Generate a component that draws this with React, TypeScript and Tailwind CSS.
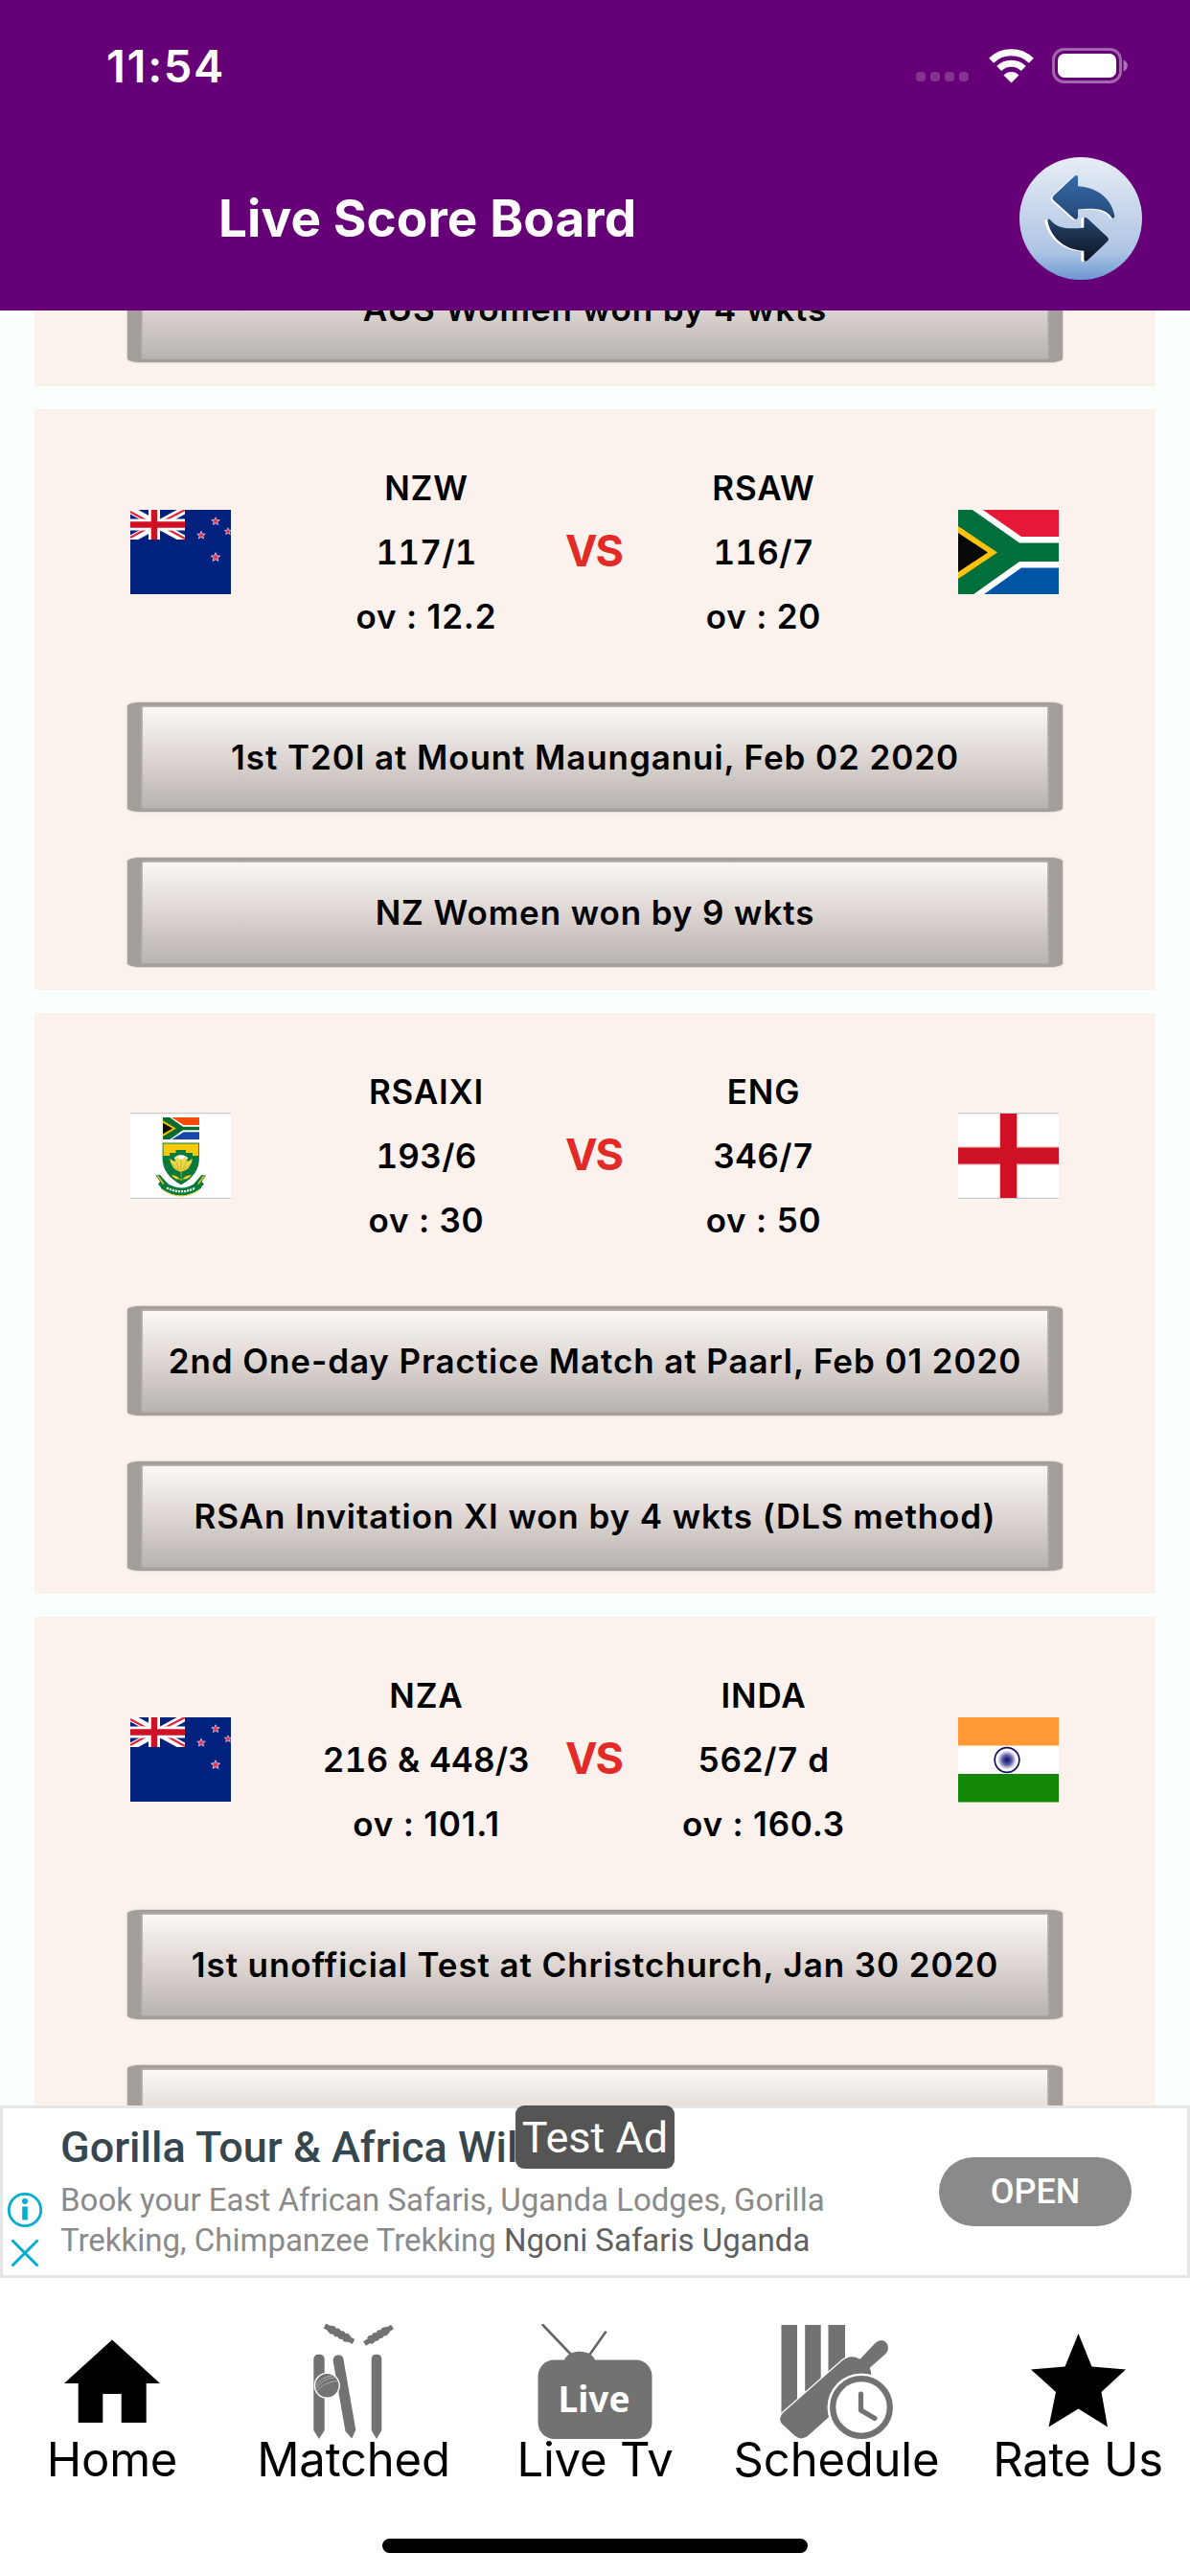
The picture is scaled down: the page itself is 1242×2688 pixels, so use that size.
import type { ReactNode } from "react";

const sans = "font-['Inter','Liberation_Sans',sans-serif]";

function StatusBar() {
  return (
    <div className="flex h-[136px] items-center justify-between pl-[111px] pr-[65px]">
      <span className="text-[47px] leading-none font-semibold tracking-[1.7px] text-white">11:54</span>
      <div className="flex items-center">
        <div className="mr-[20px] flex gap-[5px] pt-[24px]">
          {[0, 1, 2, 3].map((i) => (
            <span key={i} className="h-[10px] w-[10px] rounded-[4px] bg-white/20" />
          ))}
        </div>
        <svg width="49" height="37" viewBox="0 0 49 37" className="mr-[18px]">
          <g fill="none" stroke="#fff">
            <path d="M3.600 13.200A30 30 0 0 1 45.400 13.200" strokeWidth="7" />
            <path d="M11.700 21.500A18.300 18.300 0 0 1 37.300 21.500" strokeWidth="7" />
          </g>
          <path d="M24.500 36L17 28.400A11 11 0 0 1 32 28.400Z" fill="#fff" stroke="#fff" strokeWidth="1" strokeLinejoin="round" />
        </svg>
        <svg width="79" height="37" viewBox="0 0 79 37">
          <rect x="1.500" y="1.500" width="70" height="34" rx="11" fill="none" stroke="#fff" strokeOpacity="0.4" strokeWidth="3" />
          <rect x="6" y="6" width="61" height="25" rx="7" fill="#fff" />
          <path d="M74.500 12.500c2.600 1 4.300 3.400 4.300 6s-1.700 5-4.300 6z" fill="#fff" fillOpacity="0.45" />
        </svg>
      </div>
    </div>
  );
}

function RefreshIcon() {
  const up =
    "M178 193L242 133Q254 124 255 134V162C320 166 362 205 370 256Q369 267 361 261C345 233 305 230 255 235V258Q254 270 244 265L178 206Q173 200 178 193Z";
  const down =
    "M347 321L286 264Q275 255 274 264V292C225 298 190 295 169 268Q162 261 160 270C170 325 215 362 274 365V392Q275 402 285 395L348 335Q354 328 347 321Z";
  return (
    <svg width="128" height="128" viewBox="72 71.500 384 384">
      <defs>
        <linearGradient id="disc" x1="0" y1="0" x2="0" y2="1">
          <stop offset="0" stopColor="#e6edf6" />
          <stop offset="0.500" stopColor="#c3d2e9" />
          <stop offset="0.780" stopColor="#adc3e4" />
          <stop offset="1" stopColor="#6b97d0" />
        </linearGradient>
        <linearGradient id="arrow" gradientUnits="userSpaceOnUse" x1="0" y1="130" x2="0" y2="400">
          <stop offset="0" stopColor="#3569a8" />
          <stop offset="0.400" stopColor="#294f80" />
          <stop offset="0.650" stopColor="#1d3453" />
          <stop offset="1" stopColor="#0b1420" />
        </linearGradient>
      </defs>
      <circle cx="264" cy="263.500" r="192" fill="url(#disc)" />
      <g fill="#fff">
        <path d={up} transform="translate(-6 2)" />
        <path d={down} transform="translate(-9 1)" />
      </g>
      <path d={up} fill="url(#arrow)" />
      <path d={down} fill="url(#arrow)" />
    </svg>
  );
}

function Flag({ children }: { children: ReactNode }) {
  return (
    <svg width="105" height="90" viewBox="0 0 105 90" preserveAspectRatio="none">
      {children}
    </svg>
  );
}

const star = "M0-5L1.400-1.700 5-1.500 2.200.700 3.100 4.200 0 2.300-3.100 4.200-2.200.700-5-1.500-1.400-1.700Z";

function NewZealand() {
  return (
    <Flag>
      <rect y="1" width="105" height="88" fill="#00217d" />
      <svg y="1" width="57" height="31" viewBox="0 0 57 31" preserveAspectRatio="none">
        <path d="M0 0L57 31M57 0L0 31" stroke="#fff" strokeWidth="8" />
        <path d="M0 2L22 14M57 0L34 12M0 29L20 18M57 30L35 18" stroke="#e0243a" strokeWidth="2.200" />
        <path d="M25 0V31M0 15.500H57" stroke="#fff" strokeWidth="12" />
        <path d="M25 0V31M0 15.500H57" stroke="#cf1126" strokeWidth="6.500" />
      </svg>
      <g fill="#e8304a" stroke="#d9d4ea" strokeWidth="0.900">
        <path d={star} transform="translate(89 13) scale(.85)" />
        <path d={star} transform="translate(74 27.500) scale(.85)" />
        <path d={star} transform="translate(102 23.500) scale(.75)" />
        <path d={star} transform="translate(89 50.500) scale(.95)" />
      </g>
    </Flag>
  );
}

function SouthAfrica() {
  return (
    <Flag>
      <svg y="1" width="105" height="88" viewBox="0 0 105 88">
        <rect width="105" height="44" fill="#e51937" />
        <rect y="44" width="105" height="45" fill="#0054a6" />
        <path d="M14-4L65 31.500H110M14 93L65 57H110" fill="none" stroke="#fff" strokeWidth="7" />
        <path d="M-5-9L12-2 64 34.500H110V54H64L12 91-5 98Z" fill="#006f3c" />
        <path d="M0 17L41 44.500 0 72Z" fill="#ffc20e" />
        <path d="M0 24L31 44.500 0 65Z" fill="#08080a" />
      </svg>
    </Flag>
  );
}

function Crest() {
  return (
    <Flag>
      <rect width="105" height="90" fill="#fff" />
      <path d="M0 .6H105M0 89.400H105" stroke="#c9c9cb" strokeWidth="1.400" />
      <svg x="34" y="5" width="38" height="23" viewBox="0 0 105 88" preserveAspectRatio="none">
        <rect width="105" height="44" fill="#fa4a0c" />
        <rect y="44" width="105" height="44" fill="#1648a8" />
        <path d="M14-4L58 35H110M14 92L58 54H110" fill="none" stroke="#fff" strokeWidth="9" />
        <path d="M0-4H16L58 37H110V51H58L16 92H0Z" fill="#0a6b30" />
        <path d="M0 12L38 44 0 76Z" fill="#f5c000" />
        <path d="M0 22L28 44 0 66Z" fill="#0c0c08" />
      </svg>
      <path d="M26.500 65.500L31 65 39 74 33.500 80 29 74.500 31 72ZM79 65.500L74.500 65 66.500 74 72 80 77 74.500 74.500 72Z" fill="#0a7a3c" />
      <path d="M28.500 66L35 75M77 66L70.500 75" stroke="#e9c71c" strokeWidth="1.400" />
      <path d="M34 75.500Q43 82.500 53 82.500T71.500 75.500" fill="none" stroke="#0a7a3c" strokeWidth="8" />
      <path d="M38 78.500Q53 86 68 78.500" fill="none" stroke="#e6f2e6" strokeWidth="2.200" strokeDasharray="2.200 0.900" />
      <path d="M33 80Q43 87 53 87T73 80" fill="none" stroke="#e3c62c" strokeWidth="0.900" />
      <path d="M33 31H72.500V48C72.500 60 66 69 53 76C40 69 33 60 33 48Z" fill="#0a7a3c" stroke="#fff" strokeWidth="1.200" />
      <path d="M34.500 32.500H71V45H65V42H58V39H47.500V42H41V45H34.500Z" fill="#f8c80a" />
      <path d="M46 47Q53 41 60 47L58 52H48Z" fill="#fff" />
      <path d="M41 48Q43 60 53 62Q63 60 65 48L60 51 57 46 53 50 49 46 46 51Z" fill="#ecd64a" />
      <path d="M47 49L51 60M59 49L55 60M53 48V68M43 53L50 60M63 53L56 60" stroke="#c9a81c" strokeWidth="0.800" />
      <path d="M43 65Q49 65 53 71Q57 65 64 65Q59 71 53 69Q47 71 43 65Z" fill="#f3cf1e" />
    </Flag>
  );
}

function England() {
  return (
    <Flag>
      <rect width="105" height="90" fill="#fff" />
      <path d="M0 .6H105M0 89.400H105" stroke="#c9c9cb" strokeWidth="1.400" />
      <path d="M52.500 1V89M0 45H105" stroke="#f4c4c8" strokeWidth="19.500" />
      <path d="M52.500 1V89M0 45H105" stroke="#ce1124" strokeWidth="17" />
    </Flag>
  );
}

function India() {
  return (
    <Flag>
      <defs>
        <radialGradient id="wheel">
          <stop offset="0" stopColor="#0b0b6a" />
          <stop offset="0.500" stopColor="#5c5ca6" />
          <stop offset="1" stopColor="#fff" />
        </radialGradient>
      </defs>
      <rect y="1" width="105" height="88" fill="#fff" />
      <rect y="1" width="105" height="29.500" fill="#ff9933" />
      <rect y="60" width="105" height="29.500" fill="#138808" />
      <circle cx="51" cy="45.500" r="10" fill="url(#wheel)" />
      <circle cx="51" cy="45.500" r="12.800" fill="none" stroke="#10105e" strokeWidth="1.700" />
    </Flag>
  );
}

function Plate({ children }: { children?: ReactNode }) {
  return (
    <div className="mx-[97px] h-[114px] rounded-[14px/4px] bg-[#a39e9a] px-[16px] py-[5px] shadow-[0_0_2px_#a39e9a]">
      <div className="flex h-full items-center justify-center bg-linear-to-b from-[#fdf8f5] via-[#ddd6d2] to-[#bab4b0] pt-[2px] text-[35px] leading-none font-[560] tracking-[0.91px] whitespace-nowrap text-black shadow-[0_0_2px_1px_#c5c0bc]">
        {children}
      </div>
    </div>
  );
}

type Side = { name: string; score: string; overs: string; flag: ReactNode };

function Team({ side, width }: { side: Side; width: string }) {
  return (
    <div className={`${width} flex flex-col items-center text-[35px] leading-[67px] font-[560] tracking-[0.8px] whitespace-nowrap text-black`}>
      <span>{side.name}</span>
      <span className="tracking-[0.25px] tabular-nums">{side.score}</span>
      <span>{side.overs}</span>
    </div>
  );
}

function MatchCard({ home, away, venue, result }: { home: Side; away: Side; venue: string; result?: string }) {
  return (
    <section className="flex h-[606px] shrink-0 flex-col bg-[#fcf2ed] pt-[48px]">
      <div className="flex h-[202px] items-center px-[100px]">
        {home.flag}
        <Team side={home} width="ml-[62px] w-[284px]" />
        <span className="w-[65px] pb-[3px] text-center text-[45px] leading-none font-bold tracking-[-2px] text-[#e22a26]">VS</span>
        <Team side={away} width="mr-[58px] w-[290px]" />
        {away.flag}
      </div>
      <div className="flex flex-col gap-[48px] pt-[55.500px]">
        <Plate>{venue}</Plate>
        <Plate>{result}</Plate>
      </div>
    </section>
  );
}

const matches = [
  {
    home: { name: "NZW", score: "117/1", overs: "ov : 12.2", flag: <NewZealand /> },
    away: { name: "RSAW", score: "116/7", overs: "ov : 20", flag: <SouthAfrica /> },
    venue: "1st T20I at Mount Maunganui, Feb 02 2020",
    result: "NZ Women won by 9 wkts",
  },
  {
    home: { name: "RSAIXI", score: "193/6", overs: "ov : 30", flag: <Crest /> },
    away: { name: "ENG", score: "346/7", overs: "ov : 50", flag: <England /> },
    venue: "2nd One-day Practice Match at Paarl, Feb 01 2020",
    result: "RSAn Invitation XI won by 4 wkts (DLS method)",
  },
  {
    home: { name: "NZA", score: "216 & 448/3", overs: "ov : 101.1", flag: <NewZealand /> },
    away: { name: "INDA", score: "562/7 d", overs: "ov : 160.3", flag: <India /> },
    venue: "1st unofficial Test at Christchurch, Jan 30 2020",
  },
];

function AdBanner() {
  return (
    <aside className="relative flex h-[180px] shrink-0 items-center border-[3px] border-[#e4e6e8] bg-white font-['Roboto',sans-serif]">
      <div className="flex w-[60px] flex-col items-center self-end pr-[15px] pb-[8px]">
        <svg width="38" height="38" viewBox="0 0 38 38">
          <circle cx="19" cy="19" r="16.700" fill="none" stroke="#00aecd" strokeWidth="2.800" />
          <circle cx="19" cy="10" r="3" fill="#00aecd" />
          <path d="M16.200 15.500H21.800V29.500H16.200Z" fill="#00aecd" />
        </svg>
        <svg width="30" height="30" viewBox="0 0 30 30" className="mt-[11px]">
          <path d="M1.500 1.500L28.500 28.500M28.500 1.500L1.500 28.500" stroke="#00aecd" strokeWidth="3" />
        </svg>
      </div>
      <div className="flex-1">
        <h2 className="h-[60px] text-[45px] leading-[52px] font-medium whitespace-nowrap text-[#37474f]">Gorilla Tour &amp; Africa Wil</h2>
        <p className="w-[860px] text-[33px] leading-[42.500px] text-[#8a8a8a]">
          Book your East African Safaris, Uganda Lodges, Gorilla
          <br />
          Trekking, Chimpanzee Trekking <span className="text-[#606060]">Ngoni Safaris Uganda</span>
        </p>
      </div>
      <button className="mr-[58px] h-[72px] w-[201px] rounded-full bg-[#8a8a8a] text-[36px] leading-none font-medium text-white">OPEN</button>
      <div className="absolute top-[-3px] left-[535px] flex h-[66px] w-[166px] items-center justify-center rounded-[9px] bg-[#555] text-[45px] leading-none text-white">
        Test Ad
      </div>
    </aside>
  );
}

function IconBox({ children }: { children: ReactNode }) {
  return (
    <svg width="120" height="120" viewBox="0 0 120 120" fill="#727272">
      {children}
    </svg>
  );
}

const tabs = [
  {
    label: "Home",
    icon: (
      <IconBox>
        <path d="M60 16.500L110 62H95.700V103H69.700V73H50.300V103H24.700V62H10Z" fill="#000" />
      </IconBox>
    ),
  },
  {
    label: "Matched",
    icon: (
      <IconBox>
        <path d="M18.300 37Q18.300 31.700 24 31.700T29.700 37V111L24 120 18.300 111Z" />
        <path d="M78.700 37Q78.700 31.700 84 31.700T89.300 37V111L84 120 78.700 111Z" />
        <path d="M38.700 39Q38.200 33.300 43.500 32.500T49.500 37L62.300 110.500 58.200 119.500 51.500 112Z" />
        <g stroke="#727272" strokeWidth="5.500">
          <path d="M30 2L60 18.500M71.500 20.500L100.500 3" />
          <path d="M34.500 4.500L55.500 16M76 17.800L96 5.700" strokeWidth="7.500" />
          <path d="M36.500 5.600L54.500 15.500M77 17L95 6.300" strokeWidth="9" strokeDasharray="3 2.500" />
        </g>
        <circle cx="32.300" cy="64.300" r="12.900" stroke="#fff" strokeWidth="1.400" />
        <path d="M21 67Q27 57.500 41.500 55.500M21.500 70Q29 60.500 43.500 59.500M20.500 64Q27 55 38 54" fill="none" stroke="#c4c4c4" strokeWidth="0.700" />
      </IconBox>
    ),
  },
  {
    label: "Live Tv",
    icon: (
      <IconBox>
        <path d="M5.500 1L36 33M71 8.500L53 34" stroke="#666" strokeWidth="2.600" strokeLinecap="round" />
        <path d="M27.500 40C29 25 59 25 60.500 40Z" />
        <rect x="0.500" y="37.500" width="119" height="82.500" rx="17" />
        <text x="59" y="92" textAnchor="middle" fill="#fff" className="font-['Noto_Sans',sans-serif] text-[37px] font-bold">
          Live
        </text>
      </IconBox>
    ),
  },
  {
    label: "Schedule",
    icon: (
      <IconBox>
        <path d="M2.500 1H19V90L2.500 98ZM27.200 1H43.700V70H27.200ZM51.500 1H69V60H51.500Z" />
        <path
          d="M66 37.500Q75 30.500 84.500 36L100 19.500Q107 13.500 112.500 19Q117 25.500 112 31.500L95.500 46Q100 58 89 65L32 116Q24 123.500 16 117L2.500 104.500Q-2 99 3.500 92.500Z"
          stroke="#fff"
          strokeWidth="1.200"
        />
        <circle cx="86" cy="87" r="35.500" fill="#fff" />
        <circle cx="86" cy="87" r="29.800" fill="#fff" stroke="#727272" strokeWidth="6.300" />
        <path d="M85.500 73V90L100 98.500" fill="none" stroke="#727272" strokeWidth="5.200" strokeLinecap="round" strokeLinejoin="round" />
      </IconBox>
    ),
  },
  {
    label: "Rate Us",
    icon: (
      <IconBox>
        <path d="M60.500 10L74.500 44.500 110 47.500 84.500 71 91 107.500 60.500 88.500 29.500 107.500 37 71 11 47.500 46.500 44.500Z" fill="#000" />
      </IconBox>
    ),
  },
];

function TabBar() {
  return (
    <nav className="flex h-[311px] shrink-0 flex-col items-center bg-white">
      <div className="flex w-[1260px] shrink-0 pt-[48px]">
        {tabs.map((t) => (
          <div key={t.label} className="flex w-[252px] flex-col items-center">
            {t.icon}
            <span className="text-[49px] leading-[44px] tracking-[-0.2px] whitespace-nowrap text-black">{t.label}</span>
          </div>
        ))}
      </div>
      <div className="mt-auto mb-[24px] h-[15px] w-[444px] rounded-full bg-black" />
    </nav>
  );
}

export default function App() {
  return (
    <div className={`${sans} flex h-[2688px] w-[1242px] flex-col overflow-hidden bg-[#fafffd]`}>
      <header className="h-[324px] shrink-0 bg-[#660077]">
        <StatusBar />
        <div className="flex items-center justify-between pt-[28px] pr-[50px] pl-[228px]">
          <h1 className="text-[53px] leading-none font-[650] tracking-[0.1px] text-white">Live Score Board</h1>
          <RefreshIcon />
        </div>
      </header>
      <main className="flex min-h-0 flex-1 flex-col gap-[24px] overflow-hidden px-[36px]">
        <section className="mt-[-60px] h-[139px] shrink-0 bg-[#fcf2ed]">
          <Plate>AUS Women won by 4 wkts</Plate>
        </section>
        {matches.map((m) => (
          <MatchCard key={m.venue} {...m} />
        ))}
      </main>
      <AdBanner />
      <TabBar />
    </div>
  );
}
